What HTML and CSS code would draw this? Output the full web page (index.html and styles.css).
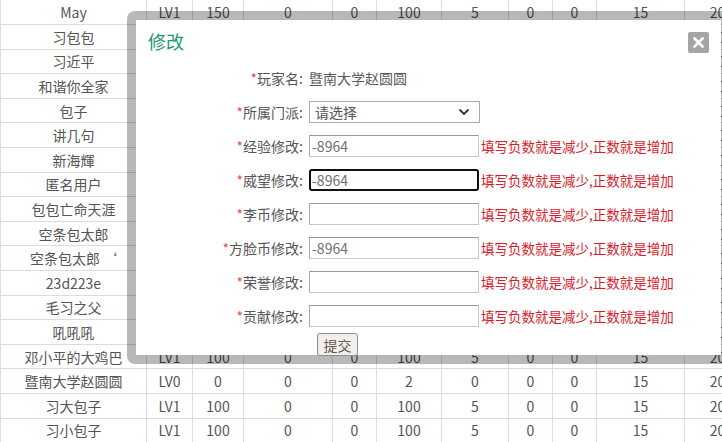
FILE: index.html
```html
<!DOCTYPE html>
<html lang="zh-CN">
<head>
    <meta charset="UTF-8">
    <meta name="viewport" content="width=device-width, initial-scale=1.0">
    <title>玩家管理</title>
    <link rel="stylesheet" href="styles.css">
</head>
<body>
    <!-- 玩家列表 -->
    <table class="players">
        <colgroup>
            <col style="width:146px"><col style="width:46px"><col style="width:51px"><col style="width:89px">
            <col style="width:44px"><col style="width:65px"><col style="width:67px"><col style="width:44px">
            <col style="width:44px"><col style="width:88px"><col style="width:66px">
        </colgroup>
        <tbody>
            <tr><td>May</td><td>LV1</td><td>150</td><td>0</td><td>0</td><td>100</td><td>5</td><td>0</td><td>0</td><td>15</td><td>20</td></tr>
            <tr><td>习包包</td><td>LV1</td><td>100</td><td>0</td><td>0</td><td>100</td><td>5</td><td>0</td><td>0</td><td>15</td><td>20</td></tr>
            <tr><td>习近平</td><td>LV1</td><td>100</td><td>0</td><td>0</td><td>100</td><td>5</td><td>0</td><td>0</td><td>15</td><td>20</td></tr>
            <tr><td>和谐你全家</td><td>LV1</td><td>100</td><td>0</td><td>0</td><td>100</td><td>5</td><td>0</td><td>0</td><td>15</td><td>20</td></tr>
            <tr><td>包子</td><td>LV1</td><td>100</td><td>0</td><td>0</td><td>100</td><td>5</td><td>0</td><td>0</td><td>15</td><td>20</td></tr>
            <tr><td>讲几句</td><td>LV1</td><td>100</td><td>0</td><td>0</td><td>100</td><td>5</td><td>0</td><td>0</td><td>15</td><td>20</td></tr>
            <tr><td>新海輝</td><td>LV1</td><td>100</td><td>0</td><td>0</td><td>100</td><td>5</td><td>0</td><td>0</td><td>15</td><td>20</td></tr>
            <tr><td>匿名用户</td><td>LV1</td><td>100</td><td>0</td><td>0</td><td>100</td><td>5</td><td>0</td><td>0</td><td>15</td><td>20</td></tr>
            <tr><td>包包亡命天涯</td><td>LV1</td><td>100</td><td>0</td><td>0</td><td>100</td><td>5</td><td>0</td><td>0</td><td>15</td><td>20</td></tr>
            <tr><td>空条包太郎</td><td>LV1</td><td>100</td><td>0</td><td>0</td><td>100</td><td>5</td><td>0</td><td>0</td><td>15</td><td>20</td></tr>
            <tr><td>空条包太郎 ‘</td><td>LV1</td><td>100</td><td>0</td><td>0</td><td>100</td><td>5</td><td>0</td><td>0</td><td>15</td><td>20</td></tr>
            <tr><td>23d223e</td><td>LV1</td><td>100</td><td>0</td><td>0</td><td>100</td><td>5</td><td>0</td><td>0</td><td>15</td><td>20</td></tr>
            <tr><td>毛习之父</td><td>LV1</td><td>100</td><td>0</td><td>0</td><td>100</td><td>5</td><td>0</td><td>0</td><td>15</td><td>20</td></tr>
            <tr><td>吼吼吼</td><td>LV1</td><td>100</td><td>0</td><td>0</td><td>100</td><td>5</td><td>0</td><td>0</td><td>15</td><td>20</td></tr>
            <tr><td>邓小平的大鸡巴</td><td>LV1</td><td>100</td><td>0</td><td>0</td><td>100</td><td>5</td><td>0</td><td>0</td><td>15</td><td>20</td></tr>
            <tr><td>暨南大学赵圆圆</td><td>LV0</td><td>0</td><td>0</td><td>0</td><td>2</td><td>0</td><td>0</td><td>0</td><td>15</td><td>20</td></tr>
            <tr><td>习大包子</td><td>LV1</td><td>100</td><td>0</td><td>0</td><td>100</td><td>5</td><td>0</td><td>0</td><td>15</td><td>20</td></tr>
            <tr><td>习小包子</td><td>LV1</td><td>100</td><td>0</td><td>0</td><td>100</td><td>5</td><td>0</td><td>0</td><td>15</td><td>20</td></tr>
        </tbody>
    </table>

    <!-- 修改弹窗 -->
    <div class="dialog">
        <h2 class="dialog-title">修改</h2>
        <a class="dialog-close" href="#">
            <svg width="11" height="11" viewBox="0 0 11 11"><path d="M1.5 1.5 L9.5 9.5 M9.5 1.5 L1.5 9.5" stroke="#fff" stroke-width="2.6" stroke-linecap="square"/></svg>
        </a>
        <form class="edit-form">
            <label><span class="req">*</span>玩家名:</label>
            <span class="value">暨南大学赵圆圆</span>
            <span></span>

            <label><span class="req">*</span>所属门派:</label>
            <div class="select">
                <span>请选择</span>
                <svg width="12" height="8" viewBox="0 0 12 8"><path d="M1.5 1.5 L6 6 L10.5 1.5" fill="none" stroke="#333" stroke-width="1.8"/></svg>
            </div>
            <span></span>

            <label><span class="req">*</span>经验修改:</label>
            <input type="text" value="-8964">
            <span class="hint">填写负数就是减少,正数就是增加</span>

            <label><span class="req">*</span>威望修改:</label>
            <input type="text" class="focused" value="-8964">
            <span class="hint">填写负数就是减少,正数就是增加</span>

            <label><span class="req">*</span>李币修改:</label>
            <input type="text" value="">
            <span class="hint">填写负数就是减少,正数就是增加</span>

            <label><span class="req">*</span>方脸币修改:</label>
            <input type="text" value="-8964">
            <span class="hint">填写负数就是减少,正数就是增加</span>

            <label><span class="req">*</span>荣誉修改:</label>
            <input type="text" value="">
            <span class="hint">填写负数就是减少,正数就是增加</span>

            <label><span class="req">*</span>贡献修改:</label>
            <input type="text" value="">
            <span class="hint">填写负数就是减少,正数就是增加</span>
        </form>
        <div class="actions">
            <button type="button">提交</button>
        </div>
    </div>
</body>
</html>
```

FILE: styles.css
```css
html, body {
    margin: 0;
    padding: 0;
    overflow: hidden;
}

body {
    font-family: "Noto Sans CJK SC", "Noto Sans", sans-serif;
    font-size: 14px;
    color: #444;
    background: #fff;
    position: relative;
    height: 442px;
}

/* 玩家表格 */
.players {
    border-collapse: collapse;
    table-layout: fixed;
    width: 750px;
}

.players tr {
    height: 24.6px;
}

.players td {
    padding: 0;
    border: 1px solid #dcdcdc;
    text-align: center;
    vertical-align: middle;
    line-height: 16px;
    white-space: nowrap;
    color: #555;
}

.players tr:first-child td {
    border-top: none;
}

/* 弹窗 */
.dialog {
    position: absolute;
    left: 127px;
    top: 11px;
    width: 585px;
    height: 335px;
    border: 9px solid rgba(0, 0, 0, 0.28);
    border-radius: 8px;
    background: #fff;
    background-clip: padding-box;
}

.dialog-title {
    margin: 0;
    padding: 10px 12px 0;
    height: 37px;
    font-size: 18px;
    line-height: 22px;
    font-weight: normal;
    color: #1b9873;
}

.dialog-close {
    position: absolute;
    top: 12px;
    right: 12px;
    width: 21px;
    height: 21px;
    background: #a5a5a5;
    border-radius: 2px;
    display: flex;
    align-items: center;
    justify-content: center;
}

/* 表单 */
.edit-form {
    display: grid;
    grid-template-columns: 173px 171px auto;
    grid-auto-rows: 22px;
    row-gap: 12px;
    align-items: center;
}

.edit-form label {
    text-align: right;
    padding-right: 6px;
    color: #555;
    font-size: 14px;
    line-height: 22px;
    white-space: nowrap;
}

.req {
    color: #d9534f;
}

.value {
    color: #5e5a55;
    line-height: 22px;
}

.edit-form input {
    box-sizing: border-box;
    width: 170px;
    height: 22px;
    margin: 0;
    padding: 0 2px;
    border: 1px solid #c8c8c8;
    border-top-color: #999;
    border-left-color: #aaa;
    font-family: inherit;
    font-size: 14px;
    color: #707070;
    background: #fff;
    outline: none;
}

.edit-form input.focused {
    border: 2px solid #111;
    border-radius: 3px;
    padding: 0 1px;
}

.select {
    box-sizing: border-box;
    width: 171px;
    height: 22px;
    border: 1px solid #aaa;
    display: flex;
    align-items: center;
    justify-content: space-between;
    padding: 0 9px 0 5px;
    color: #555;
    line-height: 20px;
}

.hint {
    padding-left: 1px;
    font-size: 13.5px;
    color: #d61d2c;
    white-space: nowrap;
    line-height: 22px;
}

.actions {
    padding: 6px 0 0 181px;
}

.actions button {
    box-sizing: border-box;
    width: 41px;
    height: 23px;
    padding: 0;
    border: 1px solid #8f8f8f;
    border-radius: 3px;
    background: #f1efec;
    font-family: inherit;
    font-size: 14px;
    line-height: 20px;
    color: #6a5a48;
}
```
